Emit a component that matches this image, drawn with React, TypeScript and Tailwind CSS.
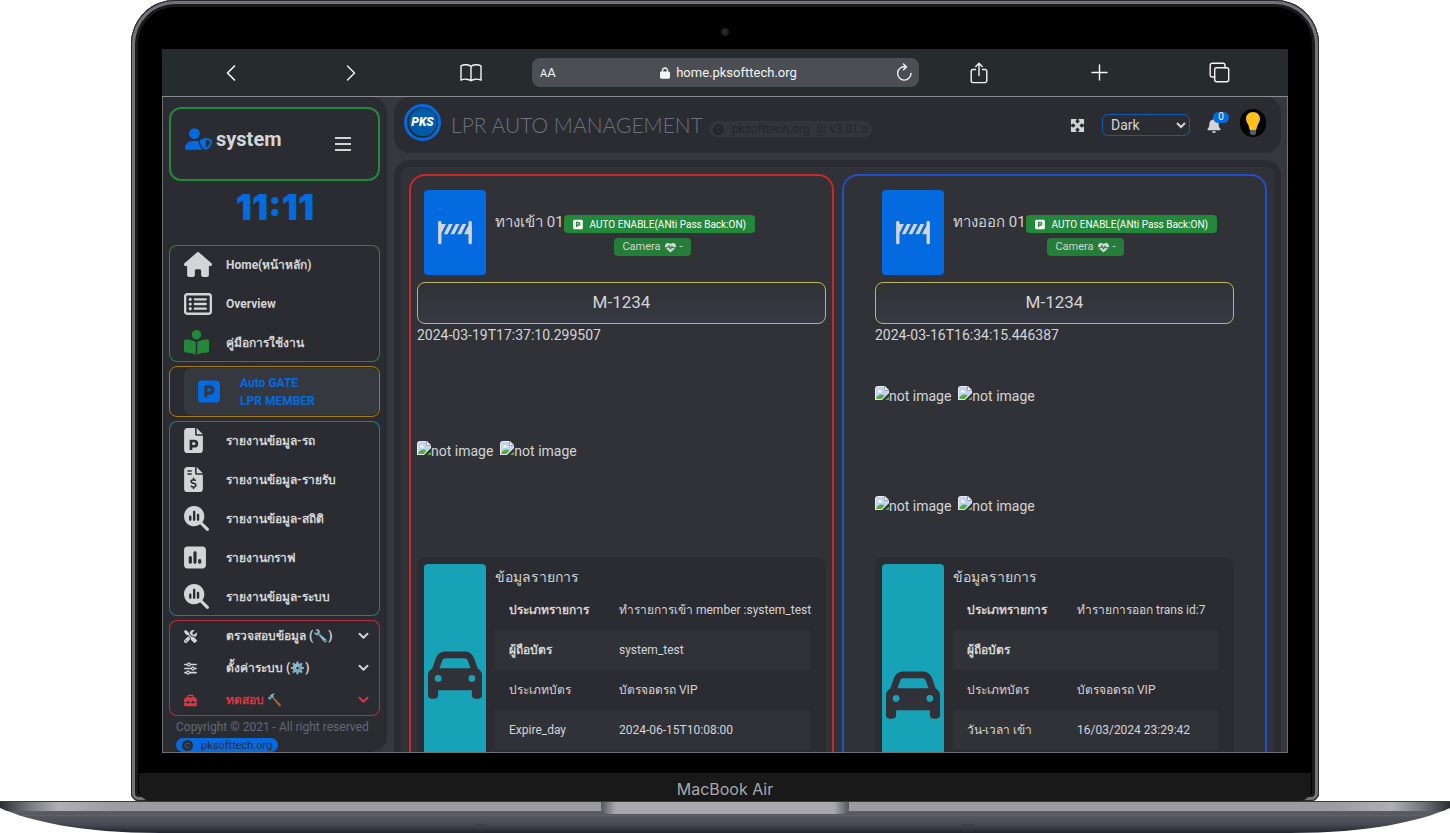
import type { ReactNode } from "react";
import {
  FaBell,
  FaBookOpenReader,
  FaCar,
  FaCopyright,
  FaFileInvoiceDollar,
  FaHeartPulse,
  FaHouse,
  FaLock,
  FaMagnifyingGlassChart,
  FaMaximize,
  FaRegRectangleList,
  FaRoadBarrier,
  FaScrewdriverWrench,
  FaSliders,
  FaSquareParking,
  FaSquarePollVertical,
  FaToolbox,
  FaUserShield,
} from "react-icons/fa6";

const stroke = {
  fill: "none",
  stroke: "currentColor",
  strokeWidth: 1.4,
  strokeLinecap: "round" as const,
  strokeLinejoin: "round" as const,
};

function BarButton({ label, children }: { label: string; children: ReactNode }) {
  return (
    <button type="button" aria-label={label} className="flex h-8 w-8 items-center justify-center text-gray-100">
      {children}
    </button>
  );
}

function BrowserBar() {
  return (
    <div className="flex h-12 shrink-0 items-center border-b border-[#8c8d90] bg-[#262b2e] px-[53px]">
      <div className="flex flex-1 items-center justify-between pr-[45px]">
        <BarButton label="Back">
          <svg width="12" height="18" viewBox="0 0 12 18" {...stroke} strokeWidth="1.7"><path d="M9.500 2 2.500 9l7 7" /></svg>
        </BarButton>
        <BarButton label="Forward">
          <svg width="12" height="18" viewBox="0 0 12 18" {...stroke}><path d="m2.500 2 7 7-7 7" /></svg>
        </BarButton>
        <BarButton label="Bookmarks">
          <svg width="22" height="20" viewBox="0 0 22 20" {...stroke}>
            <path d="M11 3.500C9 1.400 4 1.200 1 2.800v14.400c3-1.500 8-1.400 10 .6 2-2 7-2.100 10-.6V2.800C18 1.200 13 1.400 11 3.500zM11 3.500v14.300" />
          </svg>
        </BarButton>
      </div>
      <div className="flex h-[29px] w-[387px] items-center rounded-lg bg-[#4b4e53] px-2 font-[Roboto,sans-serif] text-gray-100">
        <span className="w-8 text-[13px]"><span className="text-[11px]">A</span>A</span>
        <div className="flex flex-1 items-center justify-center gap-1.5 text-[13px]">
          <FaLock className="h-3 w-[10px]" />
          <span>home.pksofttech.org</span>
        </div>
        <button type="button" aria-label="Reload" className="-mr-0.5 flex w-7 justify-end">
          <svg width="17" height="19" viewBox="0 0 17 19" {...stroke}>
            <path d="M15 10.500a6.700 6.700 0 1 1-5.500-6.700M7.500 1l3 2.900-3 2.800" />
          </svg>
        </button>
      </div>
      <div className="flex flex-1 items-center justify-between pl-[44px]">
        <BarButton label="Share">
          <svg width="18" height="22" viewBox="0 0 18 22" {...stroke}>
            <path d="M5.500 7.500H3A1.800 1.800 0 0 0 1.200 9.300v9.500A1.800 1.800 0 0 0 3 20.600h12a1.800 1.800 0 0 0 1.800-1.800V9.300A1.800 1.800 0 0 0 15 7.500h-2.500M9 13.500V1.500M5.800 4.500 9 1.300l3.200 3.200" />
          </svg>
        </BarButton>
        <BarButton label="New tab">
          <svg width="17" height="17" viewBox="0 0 17 17" {...stroke}><path d="M8.500 1v15M1 8.500h15" /></svg>
        </BarButton>
        <BarButton label="Tabs">
          <svg width="21" height="21" viewBox="0 0 21 21" {...stroke}>
            <rect x="5.700" y="5.700" width="14" height="14" rx="2" />
            <path d="M5.700 15H3.200A2 2 0 0 1 1.200 13V3.200a2 2 0 0 1 2-2H14a2 2 0 0 1 2 2v2.500" />
          </svg>
        </BarButton>
      </div>
    </div>
  );
}

function ParkingFile() {
  return (
    <svg viewBox="0 0 384 512" className="h-[25px] w-[19px]" fill="currentColor" fillRule="evenodd">
      <path d="M64 0C28.700 0 0 28.700 0 64v384c0 35.300 28.700 64 64 64h256c35.300 0 64-28.700 64-64V160H256c-17.700 0-32-14.300-32-32V0zM256 0v128h128zM112 240h96a80 80 0 0 1 0 160h-40v48h-56zm56 52v56h36a28 28 0 0 0 0-56z" />
    </svg>
  );
}

function MenuLink({ icon, children }: { icon: ReactNode; children: ReactNode }) {
  return (
    <li>
      <a href="#" className="flex h-[39px] items-center pl-[15px]">
        <span className="w-[42px]">{icon}</span>
        {children}
      </a>
    </li>
  );
}

function MenuToggle({ icon, tone, children }: { icon: ReactNode; tone?: string; children: ReactNode }) {
  return (
    <li className={tone}>
      <button type="button" className="flex h-8 w-full items-center pl-[15px] pr-[11px] text-left font-bold">
        <span className="w-[42px]">{icon}</span>
        <span className="flex-1">{children}</span>
        <svg width="11" height="8" viewBox="0 0 11 8" {...stroke} strokeWidth="2"><path d="m1.500 1.800 4 4 4-4" /></svg>
      </button>
    </li>
  );
}

function Sidebar() {
  return (
    <aside className="flex w-[224px] shrink-0 flex-col self-stretch overflow-hidden rounded-r-2xl bg-[#2b2c31] px-1.5 pt-2.5">
      <div className="flex h-[74px] w-[211px] shrink-0 items-center justify-between rounded-xl border-2 border-[#24883a] pl-3.5 pr-[26px]">
        <div className="flex items-center gap-1 pb-2.5">
          <FaUserShield className="h-[22px] w-[27px] text-[#036adf]" />
          <span className="text-xl font-bold">system</span>
        </div>
        <button type="button" aria-label="Toggle menu">
          <svg width="18" height="16" viewBox="0 0 18 16" stroke="currentColor" strokeWidth="2"><path d="M1 2h16M1 8h16M1 14h16" /></svg>
        </button>
      </div>
      <div className="flex h-[64px] shrink-0 items-center justify-center pb-3 font-[Inter,sans-serif] text-4xl font-black text-[#036adf]">11:11</div>
      <nav className="flex w-[211px] flex-col gap-1 text-xs font-bold">
        <ul className="rounded-lg ring-1 ring-inset ring-[#24883a]">
          <MenuLink icon={<FaHouse className="h-[25px] w-[28px]" />}>Home(หน้าหลัก)</MenuLink>
          <MenuLink icon={<FaRegRectangleList className="h-[28px] w-[28px]" />}>Overview</MenuLink>
          <MenuLink icon={<FaBookOpenReader className="h-[25px] w-[25px] text-[#24883a]" />}>คู่มือการใช้งาน</MenuLink>
        </ul>
        <div className="rounded-lg border border-[#a67c12] py-px pl-3.5">
          <a href="#" className="flex h-[47px] items-center rounded-lg bg-[#363840] pl-3.5 leading-[18px] text-[#036adf]">
            <span className="w-[42px]"><FaSquareParking className="h-[25px] w-[22px]" /></span>
            <span>Auto GATE<br />LPR MEMBER</span>
          </a>
        </div>
        <ul className="rounded-lg ring-1 ring-inset ring-[#17808f]">
          <MenuLink icon={<ParkingFile />}>รายงานข้อมูล-รถ</MenuLink>
          <MenuLink icon={<FaFileInvoiceDollar className="h-[25px] w-[19px]" />}>รายงานข้อมูล-รายรับ</MenuLink>
          <MenuLink icon={<FaMagnifyingGlassChart className="h-[25px] w-[25px]" />}>รายงานข้อมูล-สถิติ</MenuLink>
          <MenuLink icon={<FaSquarePollVertical className="h-[25px] w-[22px]" />}>รายงานกราฟ</MenuLink>
          <MenuLink icon={<FaMagnifyingGlassChart className="h-[25px] w-[25px]" />}>รายงานข้อมูล-ระบบ</MenuLink>
        </ul>
        <ul className="rounded-lg ring-1 ring-inset ring-[#b03242]">
          <MenuToggle icon={<FaScrewdriverWrench className="h-[13px] w-[13px]" />}>ตรวจสอบข้อมูล (🔧)</MenuToggle>
          <MenuToggle icon={<FaSliders className="h-[13px] w-[13px]" />}>ตั้งค่าระบบ (⚙️)</MenuToggle>
          <MenuToggle tone="text-[#dc3545]" icon={<FaToolbox className="h-[13px] w-[13px]" />}>ทดสอบ 🔨</MenuToggle>
        </ul>
      </nav>
      <footer className="flex flex-col items-start gap-0.5 pl-[7px] text-[#626877]">
        <p className="whitespace-nowrap pt-0.5 text-xs leading-[18px]">Copyright © 2021 - All right reserved</p>
        <a href="#" className="flex h-3.5 items-center gap-2 rounded-full bg-[#036adf] px-1.5 text-[11px] leading-none text-[#2b2c31]">
          <FaCopyright className="h-[11px] w-[11px]" />
          pksofttech.org
        </a>
      </footer>
    </aside>
  );
}

function Header() {
  return (
    <header className="flex h-14 shrink-0 items-center rounded-2xl bg-[#2b2c31] pl-2.5 pr-[15px]">
      <div className="mb-1.5 flex h-[37px] w-[37px] items-center justify-center rounded-full border-[3px] border-[#036adf]">
        <div className="flex h-7 w-7 items-center justify-center rounded-full bg-[#005ba8] text-xs font-black italic text-white">PKS</div>
      </div>
      <h1 className="ml-2.5 whitespace-nowrap font-[Lato,sans-serif] text-[21px] font-light text-[#6a7284]">LPR AUTO MANAGEMENT</h1>
      <div className="ml-1.5 mt-2 flex h-4 items-center gap-2 whitespace-nowrap rounded-full bg-[#33353b] px-1 text-xs leading-none text-[#25262a]">
        <FaCopyright className="h-[11px] w-[11px]" />
        <span>pksofttech.org &nbsp;@ v3.01.a</span>
      </div>
      <div className="ml-auto flex items-center">
        <button type="button" aria-label="Full screen"><FaMaximize className="h-[17px] w-[15px]" /></button>
        <select aria-label="Theme" defaultValue="Dark" className="ml-[17px] h-[22px] w-[88px] rounded-md border border-[#0a5cb8] bg-[#2b2c31] pl-1 text-sm leading-none">
          <option>Dark</option>
          <option>Light</option>
        </select>
        <button type="button" aria-label="Notifications" className="relative ml-[17px] w-[15px]">
          <FaBell className="h-[15px] w-[14px]" />
          <span className="absolute -top-1.5 left-1.5 flex h-[11px] w-4 items-center justify-center rounded-full bg-[#036adf] text-[10px] leading-none text-gray-100">0</span>
        </button>
        <button type="button" aria-label="Profile" className="mb-1 ml-[18px] flex h-7 w-[26px] items-center justify-center rounded-full bg-black">
          <svg width="16" height="25" viewBox="0 0 16 25">
            <path d="M8 1C4 1 1 3.800 1 7.800c0 3 1.800 4.500 2.600 7 .5 1.600.6 3.200 1.400 4.200h6c.8-1 .9-2.600 1.400-4.200.8-2.500 2.600-4 2.600-7C15 3.800 12 1 8 1z" fill="#fcc21b" />
            <path d="M5 19h6v3.500L9.500 24h-3L5 22.500z" fill="#55606a" />
          </svg>
        </button>
      </div>
    </header>
  );
}

function MissingImage() {
  return (
    <span role="img" aria-label="not image" className="flex items-start">
      <svg width="14" height="14" viewBox="0 0 14 14">
        <path d="M3 0h7l4 4v3l-7 7H0V3a3 3 0 0 1 3-3z" fill="#eceef2" />
        <path d="M3 1h6.500L13 4.500V7l-6.500 6H1V3a2 2 0 0 1 2-2z" fill="#bfd3f6" />
        <path d="M3 5.500C3 4 5.500 3.500 6 5c1.500 0 1.500 1.500.5 1.500h-3z" fill="#fff" />
        <path d="M1 13c1-3.500 3.500-5 6-4.500 1 .2 1.800.3 2.500 1L6.500 13z" fill="#55ab3c" />
        <path d="M9.500 0v4.500H14z" fill="#fff" stroke="#77787c" strokeWidth=".6" />
        <path d="M10 14l4-3.500V14z" fill="#55ab3c" />
      </svg>
      <span className="text-sm leading-5">not image</span>
    </span>
  );
}

function MissingPair() {
  return (
    <div className="flex gap-[7px]">
      <MissingImage />
      <MissingImage />
    </div>
  );
}

type Gate = {
  name: string;
  plate: string;
  time: string;
  rows: { label: string; value: string }[];
};

function GatePanel({ gate, frame, images, carOffset }: { gate: Gate; frame: string; images: ReactNode; carOffset: string }) {
  return (
    <section className={`flex min-w-0 flex-col rounded-2xl border-2 pt-2 ${frame}`}>
      <div className="flex h-[98px] shrink-0 px-[7px] pt-1.5">
        <div className="flex h-[85px] w-[62px] shrink-0 items-center justify-center rounded bg-[#036adf]">
          <FaRoadBarrier className="h-[27px] w-[34px]" />
        </div>
        <div className="flex flex-1 flex-col pl-[9px] pr-[9px] pt-5">
          <div className="flex items-center whitespace-nowrap">
            <h2 className="text-[15px] leading-6">{gate.name}</h2>
            <span className="mt-1 flex h-[18px] items-center gap-[7px] rounded bg-[#24883a] px-[9px] text-[10px] text-white">
              <FaSquareParking className="h-[11px] w-[10px]" />
              AUTO ENABLE(ANti Pass Back:ON)
            </span>
          </div>
          <span className="mt-1 flex h-[18px] items-center gap-1 self-center rounded bg-[#247d38] px-2 text-[11px]">
            Camera <FaHeartPulse className="h-[11px] w-[11px]" /> -
          </span>
        </div>
      </div>
      <div className="flex h-[42px] shrink-0 items-center justify-center rounded-lg border border-[#bfb85a] bg-linear-to-b from-[#313237] to-[#363942] text-[17px]">{gate.plate}</div>
      <p className="text-sm leading-[22px]">{gate.time}</p>
      <div className="flex h-[211px] shrink-0 flex-col">{images}</div>
      <div className="flex shrink-0 rounded-lg bg-[#2b2c31] p-[7px]">
        <div className={`flex h-[296px] w-[62px] shrink-0 items-start justify-center rounded bg-[#18a2b8] text-[#313237] ${carOffset}`}>
          <FaCar className="h-[54px] w-[54px]" />
        </div>
        <div className="min-w-0 flex-1 px-[9px]">
          <h3 className="text-sm leading-[26px]">ข้อมูลรายการ</h3>
          <table className="w-full table-fixed text-left text-xs">
            <tbody>
              {gate.rows.map((row, i) => (
                <tr key={row.label} className="h-10 even:bg-[#313237]">
                  <th scope="row" className={i < 2 ? "w-[110px] whitespace-nowrap pl-3.5 font-bold" : "w-[110px] whitespace-nowrap pl-3.5 font-normal"}>{row.label}</th>
                  <td className="whitespace-nowrap pl-3.5">{row.value}</td>
                </tr>
              ))}
            </tbody>
          </table>
        </div>
      </div>
    </section>
  );
}

const entry: Gate = {
  name: "ทางเข้า 01",
  plate: "M-1234",
  time: "2024-03-19T17:37:10.299507",
  rows: [
    { label: "ประเภทรายการ", value: "ทำรายการเข้า member :system_test" },
    { label: "ผู้ถือบัตร", value: "system_test" },
    { label: "ประเภทบัตร", value: "บัตรจอดรถ VIP" },
    { label: "Expire_day", value: "2024-06-15T10:08:00" },
  ],
};

const exit: Gate = {
  name: "ทางออก 01",
  plate: "M-1234",
  time: "2024-03-16T16:34:15.446387",
  rows: [
    { label: "ประเภทรายการ", value: "ทำรายการออก trans id:7" },
    { label: "ผู้ถือบัตร", value: "" },
    { label: "ประเภทบัตร", value: "บัตรจอดรถ VIP" },
    { label: "วัน-เวลา เข้า", value: "16/03/2024 23:29:42" },
  ],
};

function Dashboard() {
  return (
    <div className="flex min-h-0 flex-1 border-x border-b border-[#6d6e73] bg-[#363840] pr-[6px] font-[Roboto,'Noto_Sans',sans-serif] text-[#d3d4d6]">
      <Sidebar />
      <div className="flex min-w-0 flex-1 flex-col gap-[7px] overflow-hidden pl-[7px]">
        <Header />
        <main className="min-h-0 flex-1 overflow-hidden rounded-t-2xl bg-[#2b2c31] px-[7px] pt-[7px]">
          <div className="grid grid-cols-2 gap-2 rounded-lg bg-[#313237] py-[7px] pl-2 pr-[7px]">
            <GatePanel
              gate={entry}
              frame="border-[#c9282d] px-1.5"
              carOffset="pt-[84px]"
              images={<div className="pt-[95px]"><MissingPair /></div>}
            />
            <GatePanel
              gate={exit}
              frame="border-[#1f4fd0] px-[31px]"
              carOffset="pt-[104px]"
              images={<div className="flex flex-col gap-[90px] pt-10"><MissingPair /><MissingPair /></div>}
            />
          </div>
        </main>
      </div>
    </div>
  );
}

function LaptopBase() {
  return (
    <svg viewBox="0 0 1450 32" preserveAspectRatio="none" className="h-8 w-full shrink-0" aria-hidden="true">
      <defs>
        <linearGradient id="deck" x1="0" x2="1" y1="0" y2="0">
          <stop offset="0" stopColor="#2c2d33" />
          <stop offset="0.020" stopColor="#77787d" />
          <stop offset="0.040" stopColor="#b0b0b4" />
          <stop offset="0.080" stopColor="#9c9ca0" />
          <stop offset="0.920" stopColor="#9c9ca0" />
          <stop offset="0.960" stopColor="#b0b0b4" />
          <stop offset="0.980" stopColor="#77787d" />
          <stop offset="1" stopColor="#2c2d33" />
        </linearGradient>
        <linearGradient id="under" x1="0" x2="0" y1="0" y2="1">
          <stop offset="0" stopColor="#5e5f66" />
          <stop offset="0.600" stopColor="#4a4b54" />
          <stop offset="1" stopColor="#22232c" />
        </linearGradient>
        <linearGradient id="notch" x1="0" x2="1" y1="0" y2="0">
          <stop offset="0" stopColor="#55565b" />
          <stop offset="0.060" stopColor="#a9a9ad" />
          <stop offset="0.940" stopColor="#a9a9ad" />
          <stop offset="1" stopColor="#55565b" />
        </linearGradient>
        <clipPath id="hull">
          <path d="M0 0H1450V7C1420 20 1370 32 1290 32H160C80 32 30 20 0 7z" />
        </clipPath>
      </defs>
      <g clipPath="url(#hull)">
        <rect y="9" width="1450" height="23" fill="url(#under)" />
        <rect width="1450" height="10" fill="url(#deck)" />
        <rect width="1450" height="1" fill="#3a3b40" />
        <rect y="14" width="1450" height="1" fill="#6a6b72" opacity="0.500" />
      </g>
      <path d="M601 1h248v6q0 6-8 6H609q-8 0-8-6z" fill="url(#notch)" />
      <ellipse cx="481" cy="24" rx="7" ry="1.200" fill="#3e3f47" />
      <ellipse cx="968" cy="24" rx="7" ry="1.200" fill="#3e3f47" />
    </svg>
  );
}

export default function App() {
  return (
    <div className="flex h-screen flex-col overflow-hidden bg-white">
      <div className="mx-[131px] flex min-h-0 flex-1 flex-col rounded-b-lg rounded-t-[44px] bg-black px-2 shadow-[inset_0_0_0_1px_#2a2b31,inset_0_0_0_4px_#737379,inset_0_0_0_7px_#1a1a1c]">
        <div className="flex h-[49px] shrink-0 items-center justify-center pt-3.5">
          <span className="h-2 w-2 rounded-full border-2 border-[#1f1f21] bg-[#2d2d30]" />
        </div>
        <div className="mx-[23px] flex min-h-0 flex-1 flex-col overflow-hidden">
          <BrowserBar />
          <Dashboard />
        </div>
        <div className="h-5 shrink-0" />
        <div className="flex h-7 shrink-0 items-center justify-center rounded-b-xl bg-[#191919] pt-1 font-[Inter,sans-serif] text-base text-[#a9a9ad]">MacBook Air</div>
      </div>
      <LaptopBase />
    </div>
  );
}
